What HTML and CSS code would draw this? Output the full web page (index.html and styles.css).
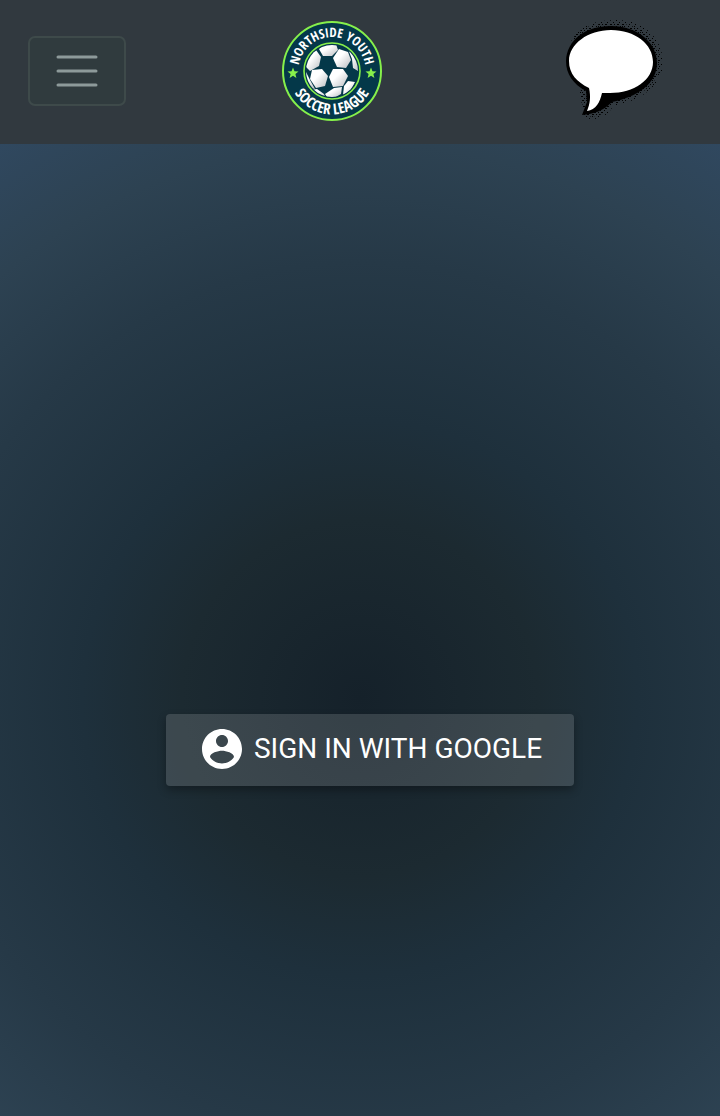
FILE: index.html
```html
<!DOCTYPE html>
<html lang="en">
<head>
<meta charset="utf-8">
<meta name="viewport" content="width=device-width, initial-scale=1">
<title>Northside Youth Soccer League</title>
<link rel="stylesheet" href="styles.css">
</head>
<body>
<header class="navbar">
  <button class="toggler" type="button" aria-label="Menu">
    <svg class="toggler-icon" viewBox="0 0 60 60" aria-hidden="true"><path d="M11 16H49M11 30H49M11 44H49"/></svg>
  </button>
  <a class="brand" href="#" aria-label="Northside Youth Soccer League">
    <svg class="logo" viewBox="0 0 100 100">
      <defs>
        <path id="arc-top" d="M17 56A33.600 33.600 0 1 1 83 56"/>
        <path id="arc-bottom" d="M7 45A43.300 43.300 0 1 0 93 45"/>
        <clipPath id="ball"><circle cx="50" cy="50" r="26"/></clipPath>
        <linearGradient id="panel" x1="0" y1="0" x2="1" y2="1"><stop offset=".4" stop-color="#fff"/><stop offset="1" stop-color="#b9bcc0"/></linearGradient>
      </defs>
      <circle cx="50" cy="50" r="49" fill="#043849" stroke="#86f04b" stroke-width="2"/>
      <circle cx="50" cy="50" r="28" fill="#043849" stroke="#86f04b" stroke-width="1.6"/>
      <g clip-path="url(#ball)" fill="url(#panel)">
        <path d="M37 28L42 23L54 23L56 29L50 35L41 35Z"/>
        <path d="M34 29L39 36L37 45L28 50L23 45L24 34Z"/>
        <path d="M57 28L66 31L69 39L64 47L55 46L51 37Z"/>
        <path d="M30 49L40 48L46 55L43 65L34 67L28 58Z"/>
        <path d="M51 48L61 48L66 55L61 65L51 66L47 56Z"/>
        <path d="M66 28L72 31L77 44L76 50L71 47L70 38Z"/>
        <path d="M24 51L28 59L33 68L28 67L22 57Z"/>
        <path d="M29 69L35 68L42 73L44 78L34 76Z"/>
        <path d="M43 73L52 67L60 66L59 73L52 77L45 76Z"/>
        <path d="M62 65L66 60L73 61L69 69L61 74Z"/>
      </g>
      <path id="star" fill="#86f04b" d="M11 46.5L12.5 50.2L16.5 50.4L13.4 53L14.4 57L11 54.8L7.600 57L8.600 53L5.500 50.400L9.500 50.200Z"/>
      <use href="#star" x="78"/>
      <g class="logo-text">
        <text class="logo-top"><textPath href="#arc-top" startOffset="50%">NORTHSIDE YOUTH</textPath></text>
        <text class="logo-bottom"><textPath href="#arc-bottom" startOffset="50%">SOCCER LEAGUE</textPath></text>
      </g>
    </svg>
  </a>
  <button class="chat" type="button" aria-label="Messages">
    <svg class="bubble" viewBox="0 0 154 102" aria-hidden="true">
      <defs>
        <pattern id="dots-far" width="6" height="6" patternUnits="userSpaceOnUse"><path d="M0 0h1v1H0zM3 2h1v1H3zM1 4h1v1H1z" shape-rendering="crispEdges"/></pattern>
        <pattern id="dots-near" width="4" height="4" patternUnits="userSpaceOnUse"><path d="M0 0h1v1H0zM2 2h1v1H2z" shape-rendering="crispEdges"/></pattern>
      </defs>
      <path fill="url(#dots-far)" d="M33 17C46 3 61 0 81 0C107 1 124 19 125 41C126 64 104 81 75 86C69 98 57 101 46 98Z"/>
      <path fill="url(#dots-near)" d="M36 15C48 5 61 3 77 3C103 4 121 20 122 42C123 63 102 78 74 84C68 95 57 98 46 96Z"/>
      <path d="M73 6C100 6 119 23 119 43C119 64 99 77 74 82C65 91 56 94 44 95L49 82L48 71C35 64 28 54 28 41C29 20 47 6 73 6Z"/>
      <path fill="#fff" d="M73 10C97 10 115 24 115 42C115 60 96 73 72 73H64C62 82 58 90 49 91C52 84 53 77 51 68C39 62 31 54 31 41C31 24 50 10 73 10Z"/>
    </svg>
  </button>
</header>
<main class="login">
  <button class="sign-in" type="button">
    <svg class="account" viewBox="0 0 24 24" aria-hidden="true"><path d="M12 2C6.480 2 2 6.480 2 12s4.480 10 10 10 10-4.480 10-10S17.520 2 12 2zm0 3c1.660 0 3 1.340 3 3s-1.340 3-3 3-3-1.340-3-3 1.340-3 3-3zm0 14.200c-2.500 0-4.710-1.280-6-3.220.03-1.990 4-3.080 6-3.080 1.990 0 5.970 1.090 6 3.080-1.290 1.940-3.500 3.220-6 3.220z"/></svg>
    <span>SIGN IN WITH GOOGLE</span>
  </button>
</main>
</body>
</html>
```
FILE: styles.css
```css
* {
  box-sizing: border-box;
}

body {
  margin: 0;
  min-height: 100vh;
  display: flex;
  flex-direction: column;
  font-family: Roboto, "Liberation Sans", sans-serif;
  background: #15202a;
}

button {
  font: inherit;
  color: inherit;
  cursor: pointer;
}

svg {
  display: block;
}

.navbar {
  display: flex;
  align-items: center;
  justify-content: space-between;
  padding: 20px 28px 22px;
  background: #31393f;
}

.toggler {
  padding: 3px 17px;
  border: 2px solid #3e4a4a;
  border-radius: 7px;
  background: #303b3e;
}

.toggler-icon {
  width: 60px;
  height: 60px;
  fill: none;
  stroke: #8d9a9a;
  stroke-width: 3;
  stroke-linecap: round;
}

.logo {
  width: 100px;
  height: 100px;
}

.logo-text {
  font-family: "Liberation Sans Narrow", "Open Sans Condensed", "Liberation Sans", sans-serif;
  font-weight: 700;
  fill: #fff;
  text-anchor: middle;
}

.logo-top {
  font-size: 13px;
}

.logo-bottom {
  font-size: 15px;
}

.chat {
  padding: 0;
  border: 0;
  background: none;
}

.bubble {
  width: 154px;
  height: 102px;
}

.login {
  flex: 1;
  display: flex;
  flex-direction: column;
  align-items: center;
  padding-left: 20px;
  background: radial-gradient(circle farthest-corner at 50% 57%, #15212a 0%, #1c2a31 27%, #1e303c 42%, #263947 66%, #2d4252 84%, #30485f 100%);
}

.login::before {
  content: "";
  flex: 19;
}

.login::after {
  content: "";
  flex: 11;
}

.sign-in {
  display: flex;
  align-items: center;
  gap: 8px;
  height: 72px;
  padding: 0 32px 3px;
  border: 0;
  border-radius: 4px;
  background: rgba(255, 255, 255, 0.14);
  box-shadow: 0 4px 8px rgba(0, 0, 0, 0.3);
  color: #fff;
  font-size: 28px;
  line-height: 36px;
}

.account {
  width: 48px;
  height: 48px;
  fill: #fff;
}
```
